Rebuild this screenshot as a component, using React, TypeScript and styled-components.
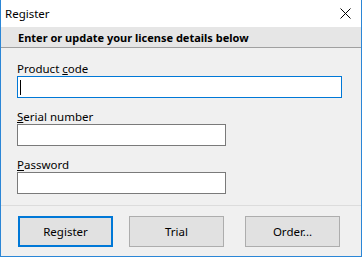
import React from "react";
import styled, { createGlobalStyle } from "styled-components";

const GlobalStyle = createGlobalStyle`
  html, body {
    margin: 0;
    padding: 0;
    background: #ffffff;
  }
  * {
    box-sizing: border-box;
  }
`;

const Window = styled.div`
  width: 362px;
  height: 257px;
  display: flex;
  flex-direction: column;
  border: 1px solid #2b86d6;
  border-top: none;
  background: #f0f0f0;
  font-family: "Noto Sans", "Open Sans", sans-serif;
  font-size: 11.5px;
  color: #000;
`;

const TitleBar = styled.div`
  height: 27px;
  display: flex;
  align-items: center;
  justify-content: space-between;
  padding: 0 10px 1px 4px;
  background: #ffffff;
`;

const Title = styled.span`
  font-size: 11.5px;
`;

const CloseIcon = styled.svg`
  display: block;
  width: 11px;
  height: 11px;
`;

const Banner = styled.div`
  height: 21px;
  display: flex;
  align-items: center;
  padding-left: 17px;
  background: #e6e6e6;
  border-bottom: 1px solid #a0a0a0;
  font-size: 11px;
  font-weight: 700;
`;

const Body = styled.div`
  flex: 1;
  display: flex;
  flex-direction: column;
  gap: 11px;
  padding: 13px 0 0 16px;
`;

const Group = styled.div`
  display: flex;
  flex-direction: column;
`;

const Label = styled.label`
  line-height: 15px;
  height: 15px;
`;

const Field = styled.div<{ $wide?: boolean; $focused?: boolean }>`
  width: ${(p) => (p.$wide ? "325px" : "209px")};
  height: 22px;
  display: flex;
  align-items: center;
  padding-left: 2px;
  background: #ffffff;
  border: 1px solid ${(p) => (p.$focused ? "#0078d7" : "#7a7a7a")};
`;

const Caret = styled.span`
  width: 1px;
  height: 15px;
  background: #000;
`;

const Footer = styled.div`
  height: 51px;
  display: flex;
  align-items: flex-start;
  gap: 16px;
  padding: 10px 0 0 17px;
  border-top: 1px solid #dcdcdc;
`;

const Button = styled.button<{ $default?: boolean; $offset?: number }>`
  width: 95px;
  height: 31px;
  margin-left: ${(p) => p.$offset || 0}px;
  padding: 0;
  background: #e1e1e1;
  border: ${(p) => (p.$default ? "2px solid #0078d7" : "1px solid #adadad")};
  font-family: inherit;
  font-size: 11.5px;
  color: #000;
`;

const App = () => {
  return (
    <>
      <GlobalStyle />
      <Window>
        <TitleBar>
          <Title>Register</Title>
          <CloseIcon viewBox="0 0 11 11">
            <path d="M0.5 0.5 L10.5 10.5 M10.5 0.5 L0.5 10.5" stroke="#000" strokeWidth="1" fill="none" />
          </CloseIcon>
        </TitleBar>
        <Banner>Enter or update your license details below</Banner>
        <Body>
          <Group>
            <Label>
              Product <u>c</u>ode
            </Label>
            <Field $wide $focused>
              <Caret />
            </Field>
          </Group>
          <Group>
            <Label>
              <u>S</u>erial number
            </Label>
            <Field />
          </Group>
          <Group>
            <Label>
              <u>P</u>assword
            </Label>
            <Field />
          </Group>
        </Body>
        <Footer>
          <Button $default>Register</Button>
          <Button>Trial</Button>
          <Button $offset={5}>Order...</Button>
        </Footer>
      </Window>
    </>
  );
};

export default App;
